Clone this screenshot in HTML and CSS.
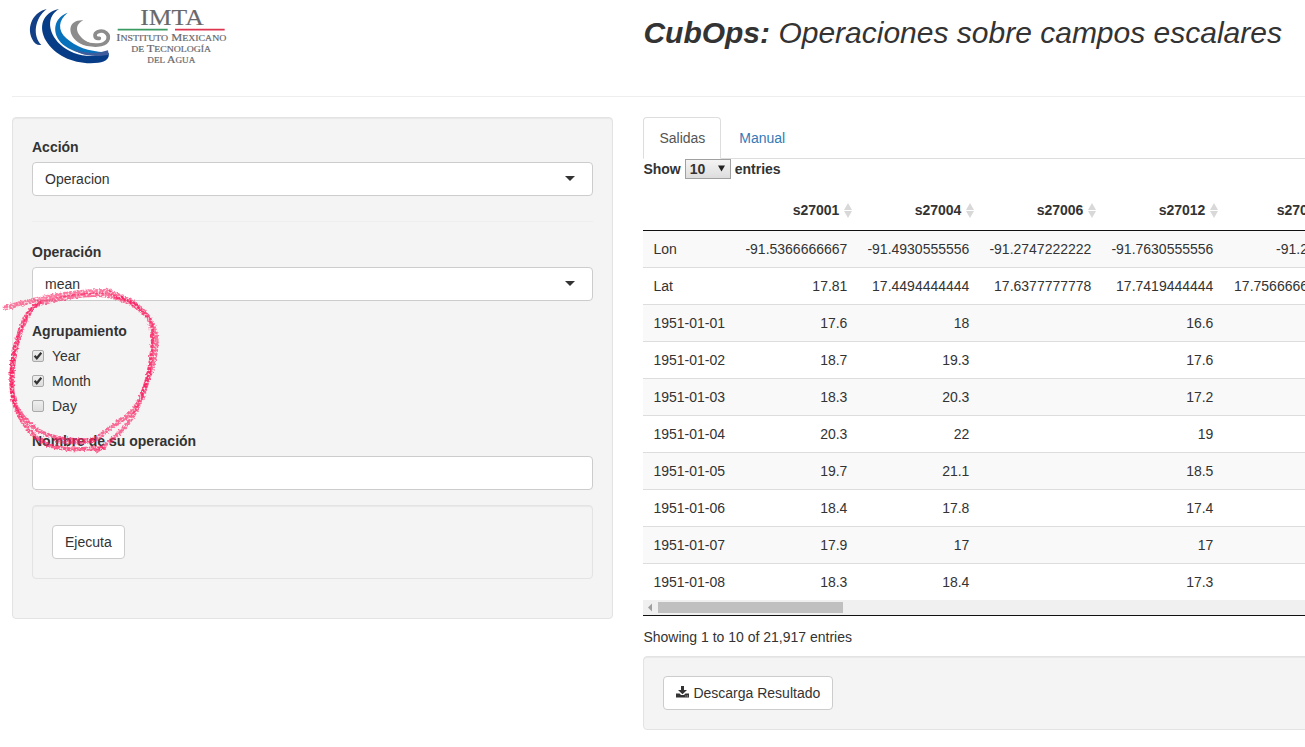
FILE: index.html
```html
<!DOCTYPE html>
<html lang="es">
<head>
<meta charset="utf-8">
<title>CubOps</title>
<link rel="stylesheet" href="styles.css">
</head>
<body>
<header class="header">
  <svg class="logo" width="220" height="75" viewBox="0 0 660 225" role="img" aria-label="IMTA">
    <path d="M80 27C42 35 18 78 36 116C42 130 52 137 64 135C38 108 42 57 80 27Z" fill="#123f86"/>
    <path d="M117 27C67 37 54 82 78 122C107 170 170 196 235 188C260 184 269 174 266 158C214 178 157 168 120 133C83 96 79 50 117 27Z" fill="#073d87"/>
    <path d="M143 38C94 56 95 111 136 139C173 165 219 168 254 157C205 154 168 141 139 115C112 91 115 60 143 38Z" fill="#0871bc"/>
    <path d="M150 142C185 160 225 164 264 151L266 164C215 174 178 165 150 142Z" fill="#3e5d9c"/>
    <path d="M190 61C146 58 138 99 174 127C184 134 196 138 206 139L209 128C180 119 151 80 190 61Z" fill="#8c8c8d"/>
    <path d="M190 128C220 140 252 137 262 122C272 103 252 88 234 95C221 101 222 117 238 115" fill="none" stroke="#8c8c8d" stroke-width="11" stroke-linecap="round"/>
    <path d="M293 89H443" stroke="#3a9b62" stroke-width="5"/>
    <path d="M465 89H614" stroke="#df3450" stroke-width="5"/>
    <g class="logo-text">
      <text x="361" y="75" font-size="72" textLength="190" lengthAdjust="spacingAndGlyphs">IMTA</text>
      <text x="289" y="122" font-size="29" textLength="330" lengthAdjust="spacingAndGlyphs">I<tspan font-size="23">NSTITUTO</tspan> M<tspan font-size="23">EXICANO</tspan></text>
      <text x="334" y="155" font-size="23" textLength="239" lengthAdjust="spacingAndGlyphs">DE <tspan font-size="29">T</tspan>ECNOLOGÍA</text>
      <text x="382" y="188" font-size="23" textLength="144" lengthAdjust="spacingAndGlyphs">DEL <tspan font-size="29">A</tspan>GUA</text>
    </g>
  </svg>
  <h2 class="title"><b>CubOps:</b> Operaciones sobre campos escalares</h2>
</header>
<div class="columns">
  <aside class="well sidebar">
    <label class="label">Acción</label>
    <div class="control">Operacion<i class="caret"></i></div>
    <hr class="rule">
    <label class="label">Operación</label>
    <div class="control">mean<i class="caret"></i></div>
    <div class="group">
      <div class="label">Agrupamiento</div>
      <div class="check"><span class="box"><svg width="12" height="12" viewBox="0 0 12 12"><path d="M2.6 5.8L4.8 8.2L9.3 2.7" fill="none" stroke="#333" stroke-width="2.2"/></svg></span>Year</div>
      <div class="check"><span class="box"><svg width="12" height="12" viewBox="0 0 12 12"><path d="M2.6 5.8L4.8 8.2L9.3 2.7" fill="none" stroke="#333" stroke-width="2.2"/></svg></span>Month</div>
      <div class="check"><span class="box"></span>Day</div>
    </div>
    <label class="label name-label">Nombre de su operación</label>
    <div class="control"></div>
    <div class="well run"><button class="btn">Ejecuta</button></div>
  </aside>
  <main class="main">
    <nav class="tabs"><a class="tab active">Salidas</a><a class="tab">Manual</a></nav>
    <div class="length">Show <span class="select">10<svg width="7" height="7" viewBox="0 0 7 7"><path d="M0 .5H7L3.5 6.5Z" fill="#222"/></svg></span> entries</div>
    <div class="scroller">
      <table class="data">
        <colgroup><col class="c0"><col class="c1"><col class="c1"><col class="c1"><col class="c1"><col class="c5"></colgroup>
        <thead><tr><th></th><th>s27001</th><th>s27004</th><th>s27006</th><th>s27012</th><th>s27015</th></tr></thead>
        <tbody>
          <tr><td>Lon</td><td>-91.5366666667</td><td>-91.4930555556</td><td>-91.2747222222</td><td>-91.7630555556</td><td>-91.2625</td></tr>
          <tr><td>Lat</td><td>17.81</td><td>17.4494444444</td><td>17.6377777778</td><td>17.7419444444</td><td>17.7566666667</td></tr>
          <tr><td>1951-01-01</td><td>17.6</td><td>18</td><td></td><td>16.6</td><td></td></tr>
          <tr><td>1951-01-02</td><td>18.7</td><td>19.3</td><td></td><td>17.6</td><td></td></tr>
          <tr><td>1951-01-03</td><td>18.3</td><td>20.3</td><td></td><td>17.2</td><td></td></tr>
          <tr><td>1951-01-04</td><td>20.3</td><td>22</td><td></td><td>19</td><td></td></tr>
          <tr><td>1951-01-05</td><td>19.7</td><td>21.1</td><td></td><td>18.5</td><td></td></tr>
          <tr><td>1951-01-06</td><td>18.4</td><td>17.8</td><td></td><td>17.4</td><td></td></tr>
          <tr><td>1951-01-07</td><td>17.9</td><td>17</td><td></td><td>17</td><td></td></tr>
          <tr><td>1951-01-08</td><td>18.3</td><td>18.4</td><td></td><td>17.3</td><td></td></tr>
        </tbody>
      </table>
      <div class="scrollbar"><svg width="15" height="15" viewBox="0 0 15 15"><path d="M9 3.5V11.5L5 7.5Z" fill="#a0a0a0"/></svg><span class="thumb"></span></div>
    </div>
    <div class="info">Showing 1 to 10 of 21,917 entries</div>
    <div class="well download"><button class="btn"><svg class="dl" width="13" height="12" viewBox="0 0 13 12"><path d="M5 0H8V4H11L6.5 8.3L2 4H5Z M0 7.6H3.6L5 9H8L9.4 7.6H13V11.5H0Z" fill="#333"/><path d="M9.5 10h.8M11.2 10h.8" stroke="#fff" stroke-width=".8"/></svg>Descarga Resultado</button></div>
  </main>
</div>
<svg class="crayon" width="200" height="190" viewBox="0 280 200 190">
  <defs>
    <filter id="rough" x="-10%" y="-10%" width="120%" height="120%">
      <feTurbulence type="fractalNoise" baseFrequency=".5" numOctaves="2" seed="4" result="n"/>
      <feDisplacementMap in="SourceGraphic" in2="n" scale="4" xChannelSelector="R" yChannelSelector="G" result="d"/>
      <feColorMatrix in="n" type="matrix" values="0 0 0 0 0 0 0 0 0 0 0 0 0 0 0 0 0 3 0 -.6" result="m"/>
      <feComposite in="d" in2="m" operator="in"/>
    </filter>
  </defs>
  <g filter="url(#rough)" fill="none" stroke="#fb2061" stroke-linecap="round" stroke-linejoin="round">
    <path d="M5 308C25 302 45 297 68 294S101 292 110 291" stroke-width="5" stroke-opacity=".6"/>
    <path d="M38 304C55 300 80 293 103 295C124 298 139 307 147 316C155 327 153 348 151 361C148 382 141 399 134 410C127 419 112 424 98 438C88 444 70 442 57 441" stroke-width="4.5" stroke-opacity=".65"/>
    <path d="M110 293C136 299 150 315 154 328C160 342 154 365 147 383C142 402 132 421 120 432C112 440 105 445 97 451" stroke-width="4" stroke-opacity=".65"/>
    <path d="M40 303C27 309 21 323 17 340C11 361 10 385 13 399C18 421 34 440 51 446C68 451 80 449 105 448" stroke-width="4" stroke-opacity=".75"/>
    <path d="M34 306C20 327 15 347 13 370C10 397 15 409 28 422C42 438 69 441 93 440" stroke-width="4" stroke-opacity=".7"/>
    <path d="M14 345C11 365 9 385 14 403M141 396C149 378 152 358 153 330M116 297C128 299 138 306 144 313" stroke-width="3" stroke-opacity=".7"/>
  </g>
</svg>
</body>
</html>
```
FILE: styles.css
```css
* { box-sizing: border-box; }
body { margin: 0; width: 1305px; height: 747px; overflow: hidden; position: relative; font: 14px/20px "Liberation Sans", Arial, sans-serif; color: #333; background: #fff; }
.header { display: flex; margin-left: 12px; height: 97px; border-bottom: 1px solid #eee; }
.logo { flex: none; margin-left: 8px; }
.logo-text { font-family: "Liberation Serif", serif; fill: #68686c; stroke: #68686c; stroke-width: .5; }
.title { margin: 16px 0 0 403.4px; font-size: 30px; line-height: 33px; font-weight: 400; font-style: italic; white-space: nowrap; }
.columns { display: flex; align-items: flex-start; gap: 30.4px; padding: 20px 0 0 12px; }
.well { background: #f4f4f4; border: 1px solid #e3e3e3; border-radius: 4px; padding: 19px; box-shadow: inset 0 1px 1px rgba(0,0,0,.05); }
.sidebar { flex: none; width: 601px; height: 502px; }
.label { display: block; font-weight: 700; margin-bottom: 5px; }
.control { height: 34px; padding: 6px 12px; background: #fff; border: 1px solid #ccc; border-radius: 4px; display: flex; align-items: center; justify-content: space-between; }
.caret { border: 5px solid transparent; border-top-color: #333; border-bottom: 0; margin: -2px 5px 0 0; }
.rule { height: 1px; border: 0; background: #eee; margin: 25px 0 20px; }
.group { margin-top: 20px; }
.group .label { margin: 0 0 5px; }
.check { display: flex; align-items: center; gap: 8px; height: 20px; margin-bottom: 5px; }
.box { width: 12px; height: 12px; border: 1px solid #aaa; border-radius: 2px; background: linear-gradient(#eee, #ddd); display: flex; align-items: center; justify-content: center; }
.box svg { flex: none; }
.name-label { margin-top: 15px; }
.run { margin-top: 15px; height: 74px; }
.btn { height: 34px; padding: 6px 12px; border: 1px solid #ccc; border-radius: 4px; background: #fff; font: inherit; color: #333; display: flex; align-items: center; gap: 4px; white-space: nowrap; }
.dl { flex: none; margin-top: -3px; }
.main { flex: none; width: 800px; }
.tabs { display: flex; gap: 2px; height: 42px; border-bottom: 1px solid #ddd; }
.tab { height: 42px; padding: 10px 15px; border: 1px solid transparent; border-radius: 4px 4px 0 0; color: #337ab7; }
.tab.active { color: #555; background: #fff; border-color: #ddd #ddd #fff; }
.length { display: flex; align-items: center; gap: 4px; height: 20px; font-weight: 700; }
.select { display: flex; align-items: center; justify-content: space-between; width: 46px; height: 20px; padding: 0 5px 0 4px; border: 1px solid #a0a0a0; background: linear-gradient(#f4f4f4, #ddd); }
.select svg { margin-top: -2px; }
.scroller { margin-top: 11px; border-bottom: 1px solid #111; }
.data { width: 698px; table-layout: fixed; border-collapse: separate; border-spacing: 0; }
.c0 { width: 92px; } .c1 { width: 122px; } .c5 { width: 118px; }
.data th { height: 41px; padding: 0 18px 0 0; border-bottom: 1px solid #111; text-align: right; position: relative; }
.data th:not(:first-child)::before, .data th:not(:first-child)::after { content: ""; position: absolute; right: 5.4px; border: 4.5px solid transparent; }
.data th:not(:first-child)::before { top: 13px; border-bottom: 7px solid #d8d8d8; border-top: 0; }
.data th:not(:first-child)::after { top: 21px; border-top: 7px solid #d8d8d8; border-bottom: 0; }
.data td { height: 37px; padding: 0 10px; border-top: 1px solid #ddd; text-align: right; white-space: nowrap; }
.data td:first-child { text-align: left; }
.data tbody tr:first-child td { height: 36px; border-top: 0; }
.data tbody tr:nth-child(odd) { background: #f9f9f9; }
.scrollbar { height: 15px; background: #f0f0f0; display: flex; align-items: center; }
.thumb { width: 185px; height: 11px; background: #c0c0c0; }
.info { padding-top: 11px; height: 40px; }
.download { height: 74px; }
.crayon { position: absolute; left: 0; top: 280px; pointer-events: none; }
```
